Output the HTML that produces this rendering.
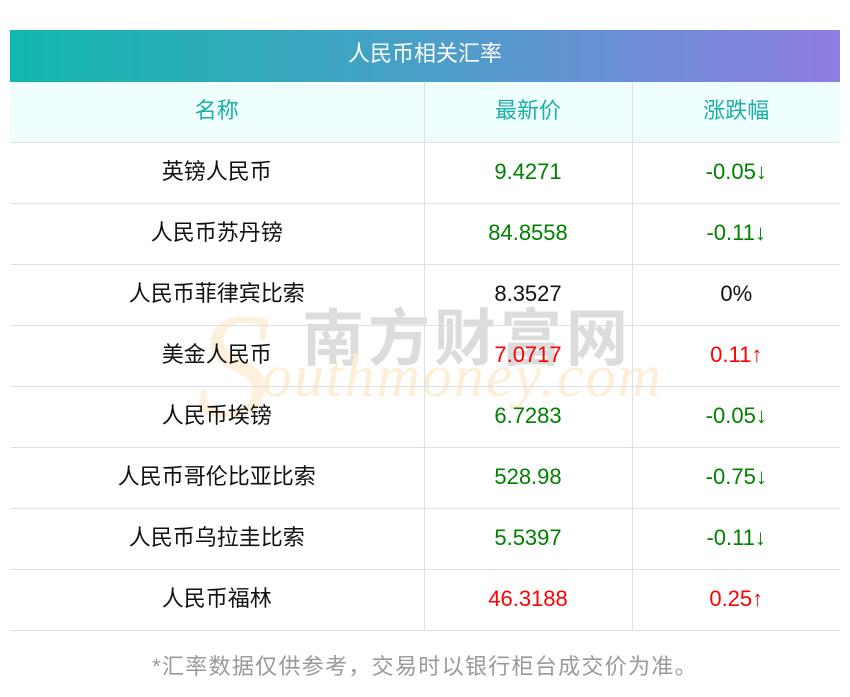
<!DOCTYPE html>
<html><head><meta charset="utf-8"><style>
body{margin:0;background:#fff;font-family:"Liberation Sans","Noto Sans CJK SC",sans-serif;}
.wrap{position:absolute;left:10px;top:30px;width:830px;z-index:2;}
.title{height:52px;background:linear-gradient(90deg,#12b8ad,#4a9fc8 50%,#8e7de2);color:#fff;font-size:22px;text-align:center;line-height:48px;}
table{border-collapse:collapse;width:830px;table-layout:fixed;}
td{height:57px;border:1px solid #dde0ec;text-align:center;font-size:22px;line-height:24px;color:#111;padding:0 0 3px 0;vertical-align:middle;background:transparent;}
tr td:first-child{border-left:none}
tr td:last-child{border-right:none}
tr.h td{background:#effefe;color:#1bb0a6;border-top:none;}
.g{color:#008000}.r{color:#ff0000}
.foot{position:absolute;top:649px;left:0;width:850px;text-align:center;color:#999;font-size:22px;letter-spacing:1.3px;}
.wm1{position:absolute;left:302px;top:288px;font-size:62px;color:#dcdcdc;letter-spacing:4px;font-family:"Noto Sans CJK SC",sans-serif;font-weight:bold;z-index:1}
.wm2{position:absolute;left:262px;top:342px;font-size:60px;color:#fdeed8;font-style:italic;font-family:"Liberation Serif",serif;letter-spacing:2px;z-index:1}
.wm3{position:absolute;left:196px;top:280px;font-size:150px;color:#fdf0dc;font-style:italic;font-family:"Liberation Serif",serif;z-index:1}
</style></head><body>
<div class="wm3">S</div>
<div class="wm1">南方财富网</div>
<div class="wm2">outhmoney.com</div>
<div class="wrap">
<div class="title">人民币相关汇率</div>
<table>
<colgroup><col style="width:414px"><col style="width:208px"><col style="width:208px"></colgroup>
<tr class="h"><td>名称</td><td>最新价</td><td>涨跌幅</td></tr>
<tr><td>英镑人民币</td><td class="g">9.4271</td><td class="g">-0.05↓</td></tr>
<tr><td>人民币苏丹镑</td><td class="g">84.8558</td><td class="g">-0.11↓</td></tr>
<tr><td>人民币菲律宾比索</td><td>8.3527</td><td>0%</td></tr>
<tr><td>美金人民币</td><td class="r">7.0717</td><td class="r">0.11↑</td></tr>
<tr><td>人民币埃镑</td><td class="g">6.7283</td><td class="g">-0.05↓</td></tr>
<tr><td>人民币哥伦比亚比索</td><td class="g">528.98</td><td class="g">-0.75↓</td></tr>
<tr><td>人民币乌拉圭比索</td><td class="g">5.5397</td><td class="g">-0.11↓</td></tr>
<tr><td>人民币福林</td><td class="r">46.3188</td><td class="r">0.25↑</td></tr>
</table>
</div>
<div class="foot">*汇率数据仅供参考，交易时以银行柜台成交价为准。</div>
</body></html>
